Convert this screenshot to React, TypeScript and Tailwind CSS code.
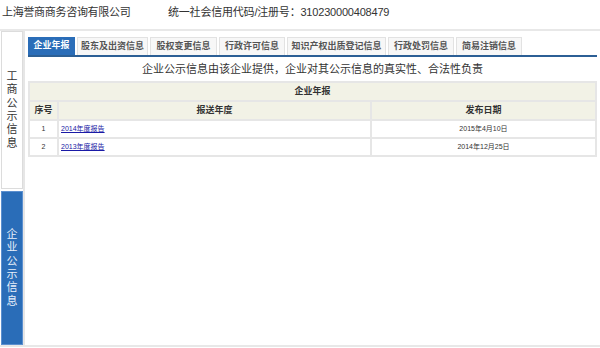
import React from 'react'

const font = "font-['Liberation_Sans','Noto_Sans_CJK_SC',sans-serif]"

const tabs = [
  { label: '企业年报', w: 'w-[47px]', active: true },
  { label: '股东及出资信息', w: 'w-[71px]' },
  { label: '股权变更信息', w: 'w-[67px]' },
  { label: '行政许可信息', w: 'w-[66px]' },
  { label: '知识产权出质登记信息', w: 'w-[99px]' },
  { label: '行政处罚信息', w: 'w-[66px]' },
  { label: '简易注销信息', w: 'w-[66px]' },
]

const rows = [
  { no: '1', name: '2014年度报告', date: '2015年4月10日' },
  { no: '2', name: '2013年度报告', date: '2014年12月25日' },
]

function VerticalText({ text }: { text: string }) {
  return (
    <div className="flex flex-col items-center leading-[13.3px]">
      {text.split('').map((c, i) => (
        <span key={i}>{c}</span>
      ))}
    </div>
  )
}

export default function App() {
  return (
    <div className={`${font} w-[600px] h-[348px] bg-white text-[#333] overflow-hidden`}>
      {/* header */}
      <div className="h-[29px] flex items-start pt-[5px] text-[11px] leading-[14px]">
        <span className="pl-[2px] w-[168px] shrink-0 tracking-[-0.3px]">上海誉商商务咨询有限公司</span>
        <span className="tracking-[-0.2px]">统一社会信用代码/注册号：310230000408479</span>
      </div>

      <div className="flex h-[318px] border-t-2 border-b-2 border-[#e8e8e8]">
        {/* sidebar */}
        <div className="w-[25px] shrink-0 border-r-2 border-[#e6e6e6] flex flex-col gap-[2px] pl-[1px]">
          <div className="h-[158px] bg-white border border-[#dcdcdc] flex items-center justify-center text-[11px] text-[#333]">
            <VerticalText text="工商公示信息" />
          </div>
          <div className="flex-1 bg-[#2a6db8] border border-[#5b8fcf] flex items-center justify-center text-[11px] text-[#e8f0fa]">
            <VerticalText text="企业公示信息" />
          </div>
        </div>

        {/* content */}
        <div className="flex-1 pl-[3px] pr-[3px] pt-[6px]">
          <div className="flex gap-[2px] border-b-2 border-[#2c5f95] h-[20px] items-end">
            {tabs.map(t => (
              <div
                key={t.label}
                className={`${t.w} h-[18px] flex items-center justify-center text-[9px] font-bold ${
                  t.active ? 'bg-[#2a6db8] text-white' : 'bg-[#f7f7f7] border border-b-0 border-[#e2e2e2] text-[#555]'
                }`}
              >
                {t.label}
              </div>
            ))}
          </div>

          <div className="h-[24px] flex items-center justify-center text-[11px] text-[#333]">
            企业公示信息由该企业提供，企业对其公示信息的真实性、合法性负责
          </div>

          <table className="w-full border-collapse border-2 border-[#e6e6e6] text-[#333]">
            <tbody>
              <tr className="h-[19px] bg-[#f2f2e6]">
                <th colSpan={3} className="text-[9px] font-bold border-2 border-[#e6e6e6]">企业年报</th>
              </tr>
              <tr className="h-[19px] bg-[#f2f2e6]">
                <th className="w-[29px] text-[9px] font-bold border-2 border-[#e6e6e6]">序号</th>
                <th className="w-[313px] text-[9px] font-bold border-2 border-[#e6e6e6]">报送年度</th>
                <th className="text-[9px] font-bold border-2 border-[#e6e6e6]">发布日期</th>
              </tr>
              {rows.map(r => (
                <tr key={r.no} className="h-[18px] bg-white">
                  <td className="text-center text-[7px] border-2 border-[#e6e6e6]">{r.no}</td>
                  <td className="text-[7px] pl-[2px] border-2 border-[#e6e6e6]">
                    <a href="#" className="text-[#1a1aa6] underline">{r.name}</a>
                  </td>
                  <td className="text-center text-[7px] border-2 border-[#e6e6e6]">{r.date}</td>
                </tr>
              ))}
            </tbody>
          </table>
        </div>
      </div>
    </div>
  )
}
